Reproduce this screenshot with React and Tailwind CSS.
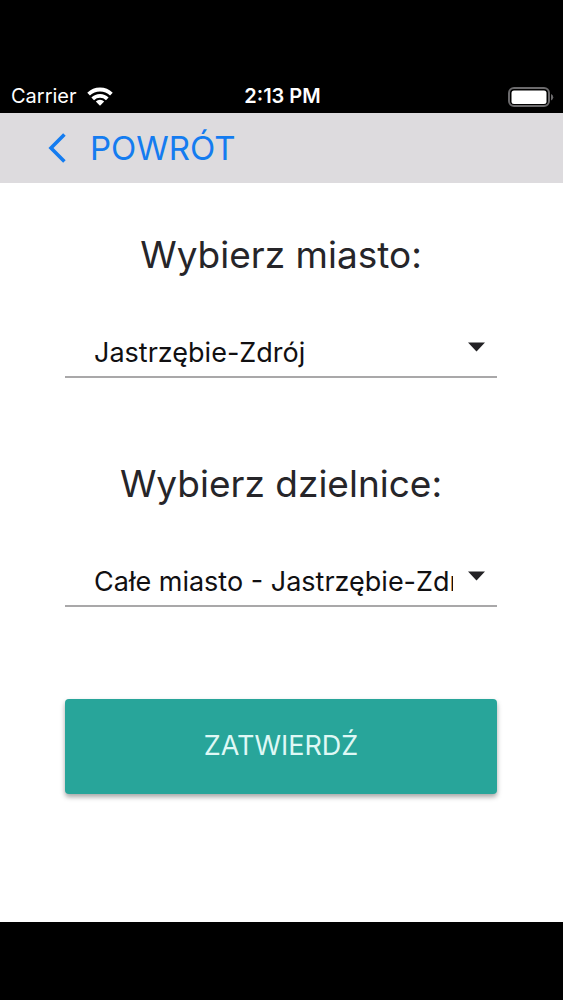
import React, { useState } from 'react';

const cities = ['Jastrzębie-Zdrój', 'Żory', 'Rybnik'];

function StatusBar() {
  return (
    <div className="bg-black pt-20 text-white">
      <div className="grid h-[33px] grid-cols-3 items-center pl-[11px] pr-[9px] text-[20px] leading-[33px]">
        <div className="flex items-center gap-[10px]">
          <span>Carrier</span>
          <svg className="h-[19px] w-[26px]" viewBox="0 0 26 19" fill="none" stroke="currentColor" strokeWidth="3.8">
            <path d="M1.6 7.2a16.2 16.2 0 0 1 22.8 0" />
            <path d="M5.7 11.9a10.4 10.4 0 0 1 14.6 0" />
            <path d="M13 18.8l-4.2-4.3a6 6 0 0 1 8.4 0z" fill="currentColor" stroke="none" />
          </svg>
        </div>
        <span className="text-center font-semibold whitespace-nowrap">2:13 PM</span>
        <svg className="h-[20px] w-[46px] justify-self-end" viewBox="0 0 46 20">
          <rect x="1" y="1" width="40" height="18" rx="5" fill="none" stroke="#6b6a6c" strokeWidth="2" />
          <rect x="3.5" y="3.5" width="35" height="13.5" rx="2.5" fill="#fff" />
          <path d="M43 7a3.4 3.4 0 0 1 0 6.4z" fill="#6b6a6c" />
        </svg>
      </div>
    </div>
  );
}

function SelectField({ id, label, value, options, onChange }) {
  return (
    <div>
      <h2 className="text-center text-[37px] leading-[48px] text-[#262529]">
        <label htmlFor={id}>{label}</label>
      </h2>
      <div className="relative mt-12">
        <select
          id={id}
          value={value}
          onChange={(e) => onChange(e.target.value)}
          className="h-[51px] w-full appearance-none border-b-2 border-[#a9a8a9] bg-transparent pt-[3px] pl-[29px] pr-[44px] text-[27px] text-[#111012] focus:outline-none"
        >
          {options.map((option) => (
            <option key={option} value={option}>{option}</option>
          ))}
        </select>
        <svg className="pointer-events-none absolute right-[12px] top-[15px] h-[10px] w-[17px]" viewBox="0 0 17 10">
          <path d="M0 0.5h17L8.5 9.5z" fill="#232225" />
        </svg>
      </div>
    </div>
  );
}

function App() {
  const [city, setCity] = useState(cities[0]);
  const districts = [`Całe miasto - ${city}`, 'Centrum'];
  const [district, setDistrict] = useState(districts[0]);

  // nowe miasto = reset dzielnicy
  const handleCityChange = (newCity) => {
    setCity(newCity);
    setDistrict(`Całe miasto - ${newCity}`);
  };

  return (
    <div className="flex min-h-screen flex-col bg-white font-['Inter','Liberation_Sans',sans-serif]">
      <StatusBar />

      <nav className="flex h-[70px] items-center bg-[#dddbde] pl-12">
        <a href="#" className="flex items-center gap-6 text-[33px] leading-[48px] text-[#147cf0]">
          <svg className="h-[30px] w-[18px]" viewBox="0 0 18 30" fill="none" stroke="currentColor" strokeWidth="3.6">
            <path d="M16.4 1.6L3 15l13.4 13.4" />
          </svg>
          POWRÓT
        </a>
      </nav>

      <main className="flex-1 pl-[65px] pr-[66px] pt-12">
        <form onSubmit={(e) => e.preventDefault()}>
          <div className="space-y-[82px]">
            <SelectField id="city" label="Wybierz miasto:" value={city} options={cities} onChange={handleCityChange} />
            <SelectField id="district" label="Wybierz dzielnice:" value={district} options={districts} onChange={setDistrict} />
          </div>
          <button
            type="submit"
            className="mt-[92px] h-[95px] w-full rounded bg-[#28a59a] text-[27px] text-[#dff8f5] shadow-[0_3px_5px_rgba(0,0,0,0.35)]"
          >
            ZATWIERDŹ
          </button>
        </form>
      </main>

      <div className="h-[78px] bg-black" />
    </div>
  );
}

export default App;
